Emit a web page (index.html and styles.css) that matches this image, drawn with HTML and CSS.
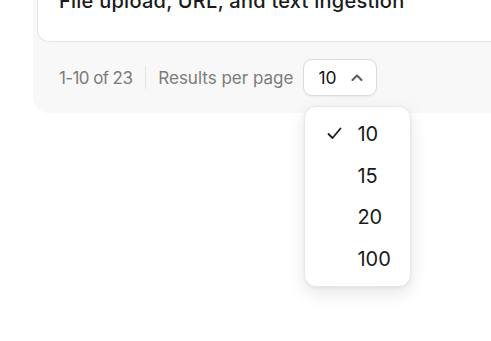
FILE: index.html
```html
<!DOCTYPE html>
<html>
<head>
<meta charset="utf-8">
<link rel="stylesheet" href="styles.css">
</head>
<body>
<div class="panel">
  <div class="card">
    <div class="title">File upload, URL, and text ingestion</div>
  </div>
  <div class="footer">
    <span class="range">1-10 of 23</span>
    <span class="divider"></span>
    <span class="label">Results per page</span>
    <div class="select-wrap">
      <button class="select">
        <span class="select-value">10</span>
        <svg class="chevron" width="12" height="7" viewBox="0 0 12 7" fill="none"><path d="M1.5 6 L6 1.5 L10.5 6" stroke="#5a5a5a" stroke-width="2" stroke-linecap="round" stroke-linejoin="round"/></svg>
      </button>
      <ul class="menu">
        <li class="item selected">
          <svg class="check" width="15" height="13" viewBox="0 0 15 13" fill="none"><path d="M1.5 7 L5.5 11 L13.5 1.5" stroke="#1f1f1f" stroke-width="1.8" stroke-linecap="round" stroke-linejoin="round"/></svg>
          <span>10</span>
        </li>
        <li class="item"><span class="check-space"></span><span>15</span></li>
        <li class="item"><span class="check-space"></span><span>20</span></li>
        <li class="item"><span class="check-space"></span><span>100</span></li>
      </ul>
    </div>
  </div>
</div>
</body>
</html>
```
FILE: styles.css
```css
* { box-sizing: border-box; }
html, body { margin: 0; padding: 0; background: #ffffff; }
body {
  font-family: Inter, "Liberation Sans", sans-serif;
  color: #1c1c1c;
  width: 491px;
  height: 341px;
  overflow: hidden;
}
.panel {
  margin: -36px 0 0 33px;
  padding: 4px 0 4px 4px;
  background: #f8f8f8;
  border-radius: 16px 0 0 16px;
  width: 500px;
}
.card {
  background: #ffffff;
  border: 1px solid #e6e6e6;
  border-right: none;
  border-radius: 12px 0 0 12px;
  padding: 20px 22px 28px 21px;
}
.title {
  font-size: 20px;
  line-height: 24px;
  font-weight: 500;
  letter-spacing: 0.25px;
  color: #1a1a1a;
  white-space: nowrap;
}
.footer {
  display: flex;
  align-items: center;
  padding: 17px 22px 13px 22px;
  font-size: 17px;
  color: #7b7b7b;
}
.range { white-space: nowrap; letter-spacing: -0.6px; }
.divider {
  width: 1px;
  height: 23px;
  background: #e4e4e4;
  margin: 0 12px 0 13px;
}
.label { white-space: nowrap; margin-right: 10px; }
.select-wrap { position: relative; }
.select {
  display: flex;
  align-items: center;
  height: 37px;
  width: 74px;
  padding: 0 13px 0 14px;
  background: #ffffff;
  border: 1px solid #dcdcdc;
  border-radius: 9px;
  box-shadow: 0 1px 2px rgba(0,0,0,0.06);
  font-family: inherit;
  font-size: 17.5px;
  color: #151515;
  cursor: pointer;
}
.select-value { flex: 1; text-align: left; }
.chevron { display: block; }
.menu {
  position: absolute;
  left: 1px;
  top: 47px;
  width: 107px;
  margin: 0;
  padding: 6px 0;
  list-style: none;
  background: #ffffff;
  border: 1px solid #e8e8e8;
  border-radius: 12px;
  box-shadow: 0 6px 18px rgba(0,0,0,0.10), 0 1px 3px rgba(0,0,0,0.06);
}
.item {
  display: flex;
  align-items: center;
  height: 41.7px;
  padding-left: 22px;
  font-size: 20px;
  color: #1a1a1a;
}
.check { display: block; width: 15px; margin-right: 15px; }
.check-space { display: block; width: 15px; margin-right: 15px; }
```
